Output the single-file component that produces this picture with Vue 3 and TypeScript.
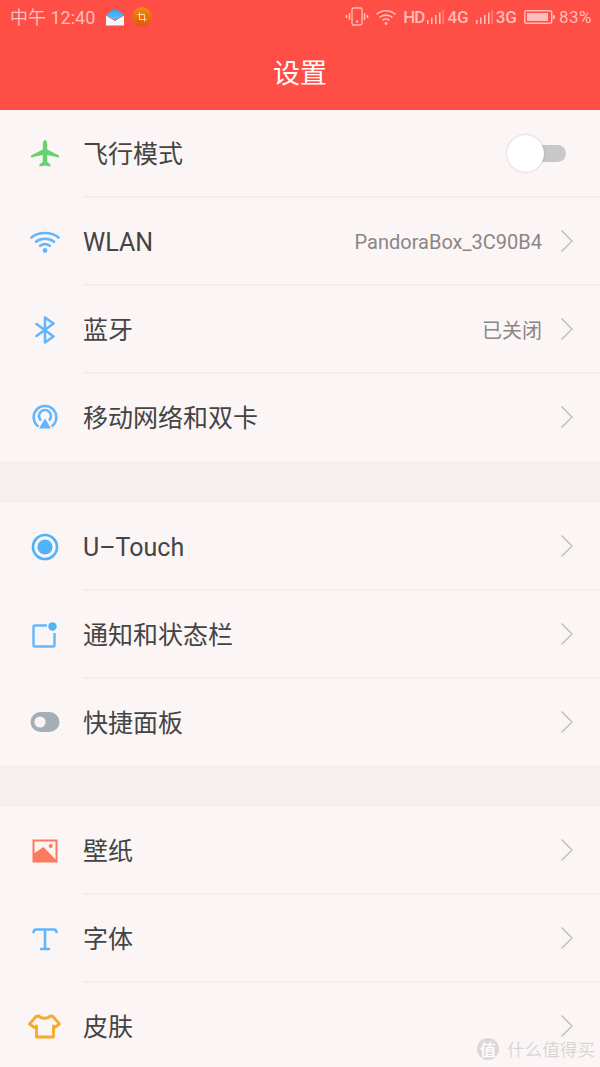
<script setup lang="ts">
type Row = { id: string; label: string; value?: string; toggle?: boolean }

const groups: Row[][] = [
  [
    { id: 'plane', label: '飞行模式', toggle: true },
    { id: 'wifi', label: 'WLAN', value: 'PandoraBox_3C90B4' },
    { id: 'bt', label: '蓝牙', value: '已关闭' },
    { id: 'mobile', label: '移动网络和双卡' },
  ],
  [
    { id: 'utouch', label: 'U–Touch' },
    { id: 'notify', label: '通知和状态栏' },
    { id: 'panel', label: '快捷面板' },
  ],
  [
    { id: 'wallpaper', label: '壁纸' },
    { id: 'font', label: '字体' },
    { id: 'skin', label: '皮肤' },
  ],
]

// Roboto sits higher than the CJK fallback, so latin strings get nudged down
const isLatin = (text: string) => /^[\w–-]+$/.test(text)
</script>

<template>
  <div class="page">
    <header class="header">
      <div class="status">
        <div class="status-left">
          <span class="time">中午 12:40</span>
          <svg class="mail" width="20" height="20" viewBox="0 0 20 20">
            <defs>
              <linearGradient id="mailTop" x1="0" y1="0" x2="0" y2="1">
                <stop offset="0" stop-color="#29a3fb" />
                <stop offset="1" stop-color="#5cc0ff" />
              </linearGradient>
            </defs>
            <path d="M1 8 10 1.5 19 8 10 13Z" fill="url(#mailTop)" />
            <path d="M1 8.5 10 14 19 8.5V18.5H1Z" fill="#f2f8fb" />
          </svg>
          <span class="app-badge">
            <svg width="10" height="10" viewBox="0 0 10 10" fill="none" stroke="#ffd9a8" stroke-width="1">
              <path d="M2.5 0.5V7.5H9.5M0.5 2.5H7.5V9.5" />
            </svg>
          </span>
        </div>
        <div class="status-right">
          <svg class="vibrate" width="24" height="20" viewBox="0 0 24 20" fill="none" stroke="#ffbdb9" stroke-width="1.3">
            <rect x="7" y="1" width="10" height="17" rx="1.5" />
            <circle cx="12" cy="14.5" r="0.6" />
            <path d="M4.5 6V13M1.5 8V11M19.5 6V13M22.5 8V11" stroke-width="1.6" />
          </svg>
          <svg width="22" height="18" viewBox="0 0 22 18" fill="none" stroke="#ffbdb9" stroke-width="1.6">
            <path d="M1.5 6.5C6.5 1.5 15.5 1.5 20.5 6.5M4.5 9.5C8 6.3 14 6.3 17.5 9.5M7.5 12.3C9.5 10.8 12.5 10.8 14.5 12.3" />
            <circle cx="11" cy="15.5" r="1.4" fill="#ffbdb9" stroke="none" />
          </svg>
          <span class="net hd">HD</span>
          <svg class="signal" width="17" height="16" viewBox="0 0 17 16" fill="#ffbdb9">
            <rect x="0" y="11" width="1.6" height="4" /><rect x="4" y="8.5" width="1.6" height="6.5" />
            <rect x="8" y="6" width="1.6" height="9" /><rect x="12" y="3.5" width="1.6" height="11.5" />
            <rect x="15.6" y="1" width="1" height="14" opacity="0.7" />
          </svg>
          <span class="net">4G</span>
          <svg class="signal gap-l" width="17" height="16" viewBox="0 0 17 16" fill="#ffbdb9">
            <rect x="0" y="11" width="1.6" height="4" /><rect x="4" y="8.5" width="1.6" height="6.5" />
            <rect x="8" y="6" width="1.6" height="9" /><rect x="12" y="3.5" width="1.6" height="11.5" />
            <rect x="15.6" y="1" width="1" height="14" opacity="0.7" />
          </svg>
          <span class="net">3G</span>
          <svg class="battery" width="31" height="14" viewBox="0 0 31 14">
            <rect x="0.75" y="0.75" width="27" height="12.5" rx="1.5" fill="none" stroke="#ffbdb9" stroke-width="1.5" />
            <rect x="3" y="3" width="21" height="8" fill="#ffbdb9" />
            <rect x="29" y="5" width="2" height="4" rx="1" fill="#ffbdb9" />
          </svg>
          <span class="percent">83%</span>
        </div>
      </div>
      <h1 class="title">设置</h1>
    </header>

    <section v-for="(group, g) in groups" :key="g" class="group">
      <div v-for="row in group" :key="row.id" class="row">
        <div class="icon">
          <svg v-if="row.id === 'plane'" width="30" height="30" viewBox="0 0 30 30" fill="#64d26e">
            <path d="M15 1C16.2 1 17.2 3 17.2 5.5V10.5L29 16.5V18.5L17.2 16V23L20.5 25.6V27.5L15 26.4 9.5 27.5V25.6L12.8 23V16L1 18.5V16.5L12.8 10.5V5.5C12.8 3 13.8 1 15 1Z" />
          </svg>
          <svg v-else-if="row.id === 'wifi'" width="30" height="24" viewBox="0 0 30 24" fill="none" stroke="#63b5fd" stroke-width="2.6" stroke-linecap="round">
            <path d="M1.5 7.5C8.5 1.5 21.5 1.5 28.5 7.5M6 11.8C11 7.8 19 7.8 24 11.8M10.2 15.8C13 13.8 17 13.8 19.8 15.8" />
            <circle cx="15" cy="20.5" r="2.4" fill="#63b5fd" stroke="none" />
          </svg>
          <svg v-else-if="row.id === 'bt'" width="24" height="28" viewBox="0 0 24 28" fill="none" stroke="#63b5fd" stroke-width="2.6" stroke-linejoin="round" stroke-linecap="round">
            <path d="M3.5 8 20.5 20.5 12 26.5V1.5L20.5 7.5 3.5 20" />
          </svg>
          <svg v-else-if="row.id === 'mobile'" width="26" height="26" viewBox="0 0 26 26" fill="none" stroke="#63b5fd" stroke-width="2.6">
            <path d="M6.5 22.5A11.3 11.3 0 1 1 19.5 22.5" />
            <path d="M9 16.5A6 6 0 1 1 17 16.5" />
            <path d="M13 14.5 19 24.5H7Z" fill="#63b5fd" stroke="none" />
          </svg>
          <svg v-else-if="row.id === 'utouch'" width="28" height="28" viewBox="0 0 28 28">
            <circle cx="14" cy="14" r="12" fill="none" stroke="#4fb3fb" stroke-width="2.6" />
            <circle cx="14" cy="14" r="7.6" fill="#4fb3fb" />
          </svg>
          <svg v-else-if="row.id === 'notify'" width="26" height="26" viewBox="0 0 26 26">
            <path d="M15 3.5H3C2 3.5 1.5 4 1.5 5V23C1.5 24 2 24.5 3 24.5H21C22 24.5 22.5 24 22.5 23V11" fill="none" stroke="#63b5fd" stroke-width="2.4" />
            <circle cx="20.5" cy="4.5" r="4.2" fill="#4fb3fb" />
          </svg>
          <svg v-else-if="row.id === 'panel'" width="30" height="22" viewBox="0 0 30 22">
            <rect x="0.5" y="1" width="29" height="20" rx="10" fill="#a4aeb7" />
            <circle cx="10" cy="11" r="5.6" fill="#f9f4f4" />
          </svg>
          <svg v-else-if="row.id === 'wallpaper'" width="26" height="24" viewBox="0 0 26 24">
            <path d="M0.5 0.5H25.5V23.5H0.5Z" fill="#fc7b5e" />
            <path d="M2.5 2.5H23.5V20.5L11.5 8 2.5 14Z" fill="#fdf3f0" />
            <circle cx="18.7" cy="7" r="2" fill="#fc7b5e" />
          </svg>
          <svg v-else-if="row.id === 'font'" width="26" height="24" viewBox="0 0 26 24" fill="none" stroke="#63b5fd" stroke-width="2.6" stroke-linecap="round">
            <path d="M1.5 5C2 3 3 2.5 4 2.5H22C23 2.5 24 3 24.5 5" />
            <path d="M13 3V21M9 22H17" />
          </svg>
          <svg v-else width="33" height="25" viewBox="0 0 33 25" fill="none" stroke="#f4ab2c" stroke-width="2.8" stroke-linejoin="round">
            <path d="M11 2 C13 5 20 5 22 2 L25 2.5 31.5 10 26.5 13.5 25.5 12V23H8.5V12L6.5 13.5 1.5 10 8 2.5Z" />
          </svg>
        </div>
        <div class="row-body">
          <span class="label" :class="{ latin: isLatin(row.label) }">{{ row.label }}</span>
          <span v-if="row.value" class="value" :class="{ latin: isLatin(row.value) }">{{ row.value }}</span>
          <span v-if="row.toggle" class="switch"><span class="knob"></span></span>
          <svg v-else class="chevron" width="14" height="24" viewBox="0 0 14 24" fill="none" stroke="#c3c0c0" stroke-width="1.5">
            <path d="M1.5 1.5 12 12 1.5 22.5" />
          </svg>
        </div>
      </div>
    </section>

    <div class="watermark">
      <span class="wm-badge">值</span>
      <span>什么值得买</span>
    </div>
  </div>
</template>

<style scoped>
.page {
  position: relative;
  width: 600px;
  height: 1067px;
  overflow: hidden;
  background: #f7efef;
  font-family: "Roboto", "Noto Sans CJK SC", sans-serif;
}
.header {
  height: 110px;
  background: #ff4e46;
  display: flex;
  flex-direction: column;
}
.status {
  height: 34px;
  display: flex;
  align-items: center;
  justify-content: space-between;
  padding: 0 8px 0 10px;
  color: #ffbdb9;
}
.status-left,
.status-right {
  display: flex;
  align-items: center;
}
.time {
  font-size: 18px;
  margin-right: 10px;
  padding-bottom: 2px;
}
.mail {
  margin-right: 7px;
}
.app-badge {
  width: 20px;
  height: 20px;
  border-radius: 50%;
  background: linear-gradient(#f58a12, #e0560f);
  display: flex;
  align-items: center;
  justify-content: center;
}
.vibrate {
  margin-right: 6px;
}
.net {
  font-size: 17px;
  font-weight: 500;
  margin-left: 3px;
}
.hd {
  margin-left: 6px;
  letter-spacing: -1px;
}
.signal {
  margin-left: 3px;
}
.gap-l {
  margin-left: 7px;
}
.battery {
  margin-left: 7px;
}
.percent {
  font-size: 17px;
  margin-left: 4px;
  letter-spacing: 0.5px;
}
.title {
  margin: 0;
  flex: 1;
  display: flex;
  align-items: center;
  justify-content: center;
  padding-bottom: 2px;
  color: #fff;
  font-size: 27px;
  font-weight: 400;
}
.group {
  background: #fbf5f5;
  margin-bottom: 42px;
}
.row {
  height: 88px;
  display: flex;
}
.row:last-child {
  height: 86.5px;
}
.icon {
  width: 83px;
  padding-left: 6px;
  box-sizing: border-box;
  flex-shrink: 0;
  display: flex;
  align-items: center;
  justify-content: center;
}
.row-body {
  flex: 1;
  display: flex;
  align-items: center;
  padding-right: 26px;
  border-bottom: 2px solid #f3eeee;
}
.row:last-child .row-body {
  border-bottom: none;
}
.label {
  flex: 1;
  font-size: 25px;
  color: #444;
  padding-bottom: 2px;
}
.label.latin {
  padding-bottom: 0;
  padding-top: 3px;
}
.value {
  font-size: 20px;
  color: #8a8686;
  margin-right: 18px;
}
.value.latin {
  padding-top: 2px;
}
.switch {
  position: relative;
  width: 44px;
  height: 17px;
  margin-right: 8px;
  border-radius: 9px;
  background: #c8c8c8;
}
.knob {
  position: absolute;
  left: -15px;
  top: -10px;
  width: 37px;
  height: 37px;
  border-radius: 50%;
  background: #fff;
  box-shadow: 0 0 2px rgba(0, 0, 0, 0.25);
}
.watermark {
  position: absolute;
  right: 5px;
  bottom: 6px;
  display: flex;
  align-items: center;
  gap: 8px;
  font-size: 17.6px;
  color: rgba(215, 210, 210, 0.95);
  text-shadow: 0 0 1px #fff;
}
.wm-badge {
  width: 22px;
  height: 22px;
  border-radius: 50%;
  background: #dcd8d8;
  color: #fff;
  font-size: 16px;
  display: flex;
  align-items: center;
  justify-content: center;
}
</style>

<style>
body {
  margin: 0;
}
</style>
